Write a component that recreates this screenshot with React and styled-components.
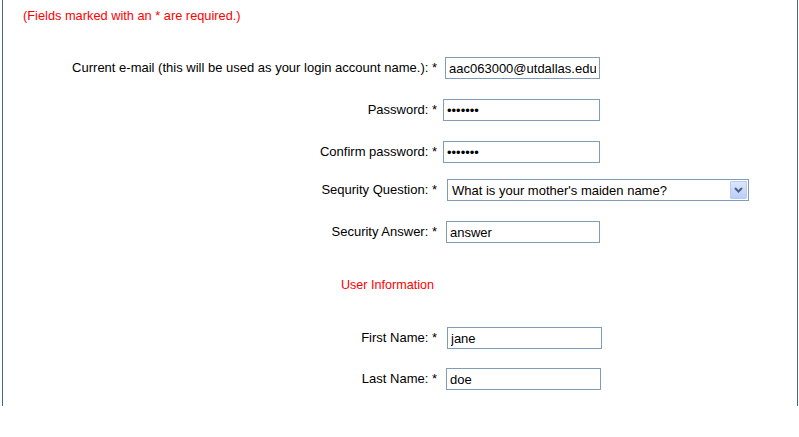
import React from "react";
import styled, { createGlobalStyle } from "styled-components";

const Global = createGlobalStyle`
  html, body { margin: 0; padding: 0; background: #ffffff; }
  body { font-family: "Liberation Sans", Arial, sans-serif; }
`;

const Frame = styled.div`
  margin-left: 2px;
  width: 794px;
  border-left: 1px solid #46677f;
  border-right: 1px solid #46677f;
  padding-top: 8px;
  box-sizing: content-box;
  height: 398px;
  overflow: hidden;
`;

const Notice = styled.div`
  color: #ff0000;
  font-size: 12.8px;
  line-height: 15px;
  padding-left: 20px;
`;

const Row = styled.div`
  display: grid;
  grid-template-columns: 434px 1fr;
  align-items: center;
  height: 22px;
  margin-top: ${(p) => p.$mt}px;
`;

const Label = styled.label`
  text-align: right;
  font-size: 13px;
  line-height: 22px;
  color: #000;
  white-space: nowrap;
`;

const Section = styled.div`
  text-align: right;
  padding-right: 3px;
  font-size: 12.6px;
  color: #ff0000;
  line-height: 22px;
`;

const Input = styled.input`
  box-sizing: border-box;
  width: ${(p) => p.$w || 155}px;
  height: 22px;
  margin-left: ${(p) => p.$ml || 8}px;
  border: 1px solid #7f9db9;
  padding: 0 3px;
  font-family: "Liberation Sans", Arial, sans-serif;
  font-size: 13px;
  color: #000;
  background: #fff;
  outline: none;
`;

const SelectBox = styled.div`
  box-sizing: border-box;
  width: 302px;
  height: 22px;
  margin-left: 10px;
  border: 1px solid #7f9db9;
  display: flex;
  align-items: center;
  justify-content: space-between;
  padding: 1px 1px 1px 4px;
  font-size: 13px;
  color: #000;
`;

const DropButton = styled.div`
  width: 17px;
  height: 18px;
  box-sizing: border-box;
  border: 1px solid #b8cbf4;
  border-radius: 1px;
  background: linear-gradient(#dbe6fd, #bccdf6);
  display: flex;
  align-items: center;
  justify-content: center;
`;

export default function App() {
  return (
    <>
      <Global />
      <Frame>
        <Notice>(Fields marked with an * are required.)</Notice>
        <Row $mt={34}>
          <Label>Current e-mail (this will be used as your login account name.): *</Label>
          <Input readOnly defaultValue="aac063000@utdallas.edu" />
        </Row>
        <Row $mt={20}>
          <Label>Password: *</Label>
          <Input readOnly defaultValue="•••••••" $w={157} $ml={6} />
        </Row>
        <Row $mt={20}>
          <Label>Confirm password: *</Label>
          <Input readOnly defaultValue="•••••••" $w={157} $ml={6} />
        </Row>
        <Row $mt={16}>
          <Label>Sequrity Question: *</Label>
          <SelectBox>
            <span>What is your mother's maiden name?</span>
            <DropButton>
              <svg width="9" height="6" viewBox="0 0 9 6">
                <path d="M1 1 L4.5 4.5 L8 1" fill="none" stroke="#4d6185" strokeWidth="2" />
              </svg>
            </DropButton>
          </SelectBox>
        </Row>
        <Row $mt={20}>
          <Label>Security Answer: *</Label>
          <Input readOnly defaultValue="answer" $w={154} $ml={9} />
        </Row>
        <Row $mt={31}>
          <Section>User Information</Section>
        </Row>
        <Row $mt={31}>
          <Label>First Name: *</Label>
          <Input readOnly defaultValue="jane" $ml={10} />
        </Row>
        <Row $mt={19}>
          <Label>Last Name: *</Label>
          <Input readOnly defaultValue="doe" $ml={9} />
        </Row>
      </Frame>
    </>
  );
}
